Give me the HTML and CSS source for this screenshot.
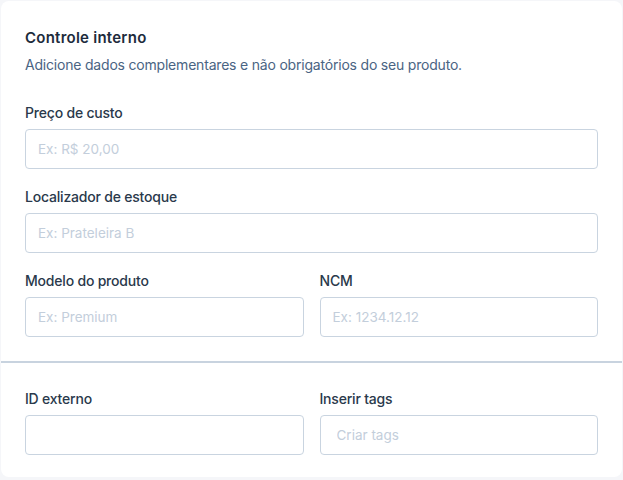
FILE: index.html
```html
<!DOCTYPE html>
<html lang="pt-BR">
    <head>
        <meta charset="UTF-8" />
        <meta name="viewport" content="width=device-width, initial-scale=1.0" />
        <title>Controle interno</title>
        <link rel="stylesheet" href="styles.css">
    </head>
    <body>
        <div class="card">
            <div class="secao">
                <h2 class="titulo">Controle interno</h2>
                <p class="subtitulo">Adicione dados complementares e não obrigatórios do seu produto.</p>

                <div class="campos">
                    <div class="campo">
                        <label class="rotulo">Preço de custo</label>
                        <input type="text" class="entrada" placeholder="Ex: R$ 20,00">
                    </div>
                    <div class="campo">
                        <label class="rotulo">Localizador de estoque</label>
                        <input type="text" class="entrada" placeholder="Ex: Prateleira B">
                    </div>
                    <div class="linha">
                        <div class="campo">
                            <label class="rotulo">Modelo do produto</label>
                            <input type="text" class="entrada" placeholder="Ex: Premium">
                        </div>
                        <div class="campo">
                            <label class="rotulo">NCM</label>
                            <input type="text" class="entrada" placeholder="Ex: 1234.12.12">
                        </div>
                    </div>
                </div>
            </div>

            <div class="secao secao-baixo">
                <div class="linha">
                    <div class="campo">
                        <label class="rotulo">ID externo</label>
                        <input type="text" class="entrada">
                    </div>
                    <div class="campo">
                        <label class="rotulo">Inserir tags</label>
                        <input type="text" class="entrada entrada-tags" placeholder="Criar tags">
                    </div>
                </div>
            </div>
        </div>
    </body>
</html>
```

FILE: styles.css
```css
body{
    margin: 0;
    padding: 0;
    background-color: #f5f6f9;
    font-family: Inter, "Noto Sans", sans-serif;
}

.card{
    width: 621px;
    height: 476px;
    margin: 1px 0 0 1px;
    background-color: #ffffff;
    border-radius: 8px;
    box-sizing: border-box;
}

.secao{
    padding: 24px 24px 24px 24px;
    border-bottom: 2px solid #c8d3df;
}

.secao-baixo{
    padding-top: 26px;
    padding-bottom: 22px;
    border-bottom: 0;
}

.titulo{
    margin: 0;
    font-size: 15px;
    line-height: 25px;
    font-weight: 600;
    letter-spacing: 0.25px;
    color: #1d2b3c;
}

.subtitulo{
    margin: 5px 0 0 0;
    font-size: 14px;
    line-height: 20px;
    letter-spacing: -0.2px;
    color: #4a6483;
}

.campos{
    margin-top: 28px;
    display: flex;
    flex-direction: column;
    gap: 18px;
}

.linha{
    display: grid;
    grid-template-columns: 1fr 1fr;
    gap: 16px;
}

.campo{
    display: flex;
    flex-direction: column;
}

.rotulo{
    font-size: 14px;
    line-height: 20px;
    font-weight: 500;
    letter-spacing: -0.2px;
    color: #2a394b;
    margin-bottom: 6px;
}

.entrada{
    height: 40px;
    margin: 0;
    padding: 0 12px;
    box-sizing: border-box;
    border: 1px solid #c9d4e0;
    border-radius: 4px;
    background-color: #ffffff;
    font-family: Inter, "Noto Sans", sans-serif;
    font-size: 13.5px;
    color: #263547;
    outline: none;
}

.entrada::placeholder{
    color: #c3cedb;
}

.entrada-tags{
    padding-left: 16px;
}
```
